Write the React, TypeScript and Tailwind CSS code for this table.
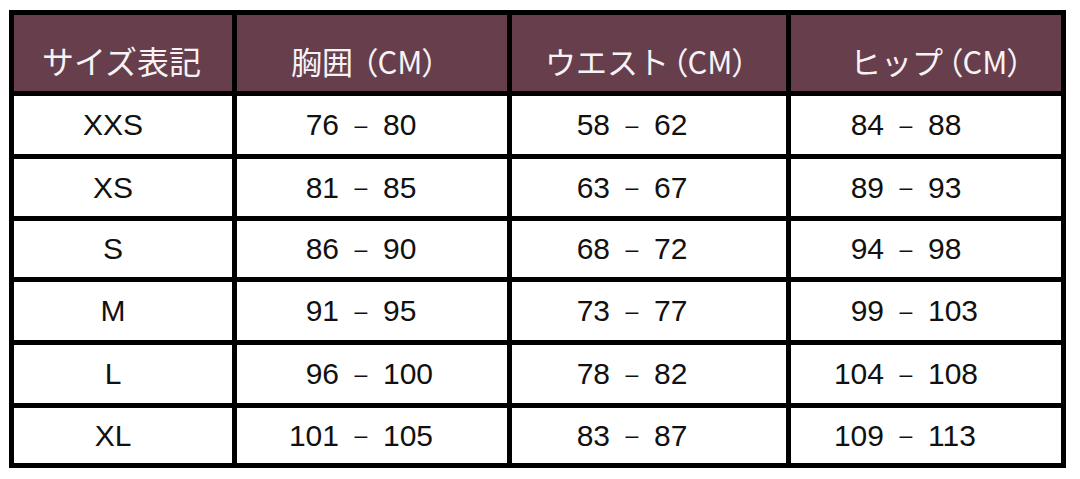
import React from "react";

// サイズ表 (size chart)
const headers = [
  { name: "サイズ表記", unit: "", pad: "pl-[28px]", gap: "", size: "text-[32px]" },
  { name: "胸囲", unit: "（CM）", pad: "pl-[54px]", gap: "ml-[9px]", size: "text-[31px]" },
  { name: "ウエスト", unit: "（CM）", pad: "pl-[33px]", gap: "ml-[3px]", size: "text-[31px]" },
  { name: "ヒップ", unit: "（CM）", pad: "pl-[59px]", gap: "ml-[4px]", size: "text-[31px]" },
];

const rows: [string, [string, string], [string, string], [string, string]][] = [
  ["XXS", ["76", "80"], ["58", "62"], ["84", "88"]],
  ["XS", ["81", "85"], ["63", "67"], ["89", "93"]],
  ["S", ["86", "90"], ["68", "72"], ["94", "98"]],
  ["M", ["91", "95"], ["73", "77"], ["99", "103"]],
  ["L", ["96", "100"], ["78", "82"], ["104", "108"]],
  ["XL", ["101", "105"], ["83", "87"], ["109", "113"]],
];

// left padding per range column so the dashes line up like the reference
const rangePad = ["pl-[42px]", "pl-[38px]", "pl-[33px]"];

const Range = ({ from, to, pad }: { from: string; to: string; pad: string }) => (
  <div className={`flex h-full items-center bg-white ${pad}`}>
    <span className="w-[60px] text-right">{from}</span>
    <span className="w-[44px] text-center text-[23px]">–</span>
    <span>{to}</span>
  </div>
);

export default function App() {
  return (
    <div className="h-[479px] w-[1080px] bg-white pl-[9px] pt-[10px]">
      <div
        className="grid w-fit grid-cols-[218px_270px_274px_270px] grid-rows-[76px_58px_57px_56px_58px_58px_55px] gap-[5px] border-[5px] border-black bg-black text-[30px] leading-none text-[#111]"
        style={{ fontFamily: '"Liberation Sans", "Noto Sans CJK JP", sans-serif' }}
      >
        {headers.map((h) => (
          <div
            key={h.name}
            className={`flex items-center justify-start whitespace-nowrap bg-[#673e4c] pt-[14px] text-[#f7f3f5] [font-family:'Noto_Sans_CJK_JP',sans-serif] ${h.size} ${h.pad}`}
          >
            <span>{h.name}</span>
            {h.unit && <span className={`[font-feature-settings:'palt'] ${h.gap}`}>{h.unit}</span>}
          </div>
        ))}
        {rows.map(([size, chest, waist, hip]) => (
          <React.Fragment key={size}>
            <div className="flex items-center justify-center bg-white pr-[20px]">{size}</div>
            <Range from={chest[0]} to={chest[1]} pad={rangePad[0]} />
            <Range from={waist[0]} to={waist[1]} pad={rangePad[1]} />
            <Range from={hip[0]} to={hip[1]} pad={rangePad[2]} />
          </React.Fragment>
        ))}
      </div>
    </div>
  );
}
